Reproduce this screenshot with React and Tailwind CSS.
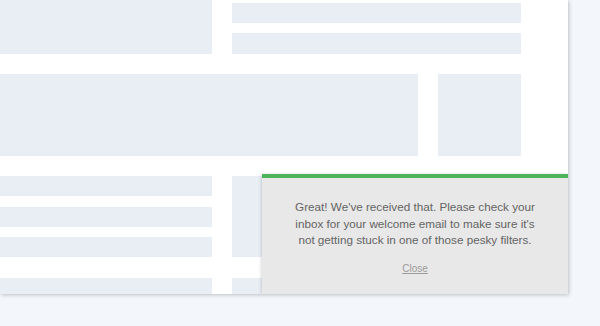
export default function App() {
  const bar = "bg-[#e9eef5]";
  return (
    <div className="w-[600px] h-[326px] bg-[#f3f6fa] overflow-hidden" style={{ fontFamily: '"Liberation Sans", Arial, sans-serif' }}>
      <div className="relative w-[568px] h-[294px] bg-white shadow-[1px_1px_4px_rgba(0,0,0,0.22)] overflow-hidden">
        <div className="flex flex-col w-[521px] gap-[20px]">
          <div className="flex gap-[20px]">
            <div className={`w-[212px] h-[54px] ${bar}`} />
            <div className="flex-1 flex flex-col gap-[10px] pt-[3px]">
              <div className={`h-[20px] ${bar}`} />
              <div className={`h-[21px] ${bar}`} />
            </div>
          </div>
          <div className="flex gap-[20px] h-[82px]">
            <div className={`w-[418px] ${bar}`} />
            <div className={`flex-1 ${bar}`} />
          </div>
          <div className="flex gap-[20px]">
            <div className="w-[212px] flex flex-col">
              <div className={`h-[20px] ${bar}`} />
              <div className={`h-[20px] mt-[11px] ${bar}`} />
              <div className={`h-[20px] mt-[10px] ${bar}`} />
              <div className={`h-[20px] mt-[21px] ${bar}`} />
            </div>
            <div className="flex-1 flex flex-col">
              <div className={`h-[81px] ${bar}`} />
              <div className={`h-[20px] mt-[21px] ${bar}`} />
            </div>
          </div>
        </div>
        <div className="absolute right-0 bottom-0 w-[306px] h-[120px] bg-[#e8e8e8] border-t-4 border-[#4cb55b] shadow-[-1px_0_3px_rgba(0,0,0,0.15)] flex flex-col items-center pt-[21px]">
          <p className="text-[11.7px] leading-[16.5px] text-[#646464] text-center w-[250px]">
            Great! We've received that. Please check your inbox for your welcome email to make sure it's not getting stuck in one of those pesky filters.
          </p>
          <a className="mt-[13px] text-[10px] leading-[14px] text-[#9a9a9a] underline">Close</a>
        </div>
      </div>
    </div>
  );
}
